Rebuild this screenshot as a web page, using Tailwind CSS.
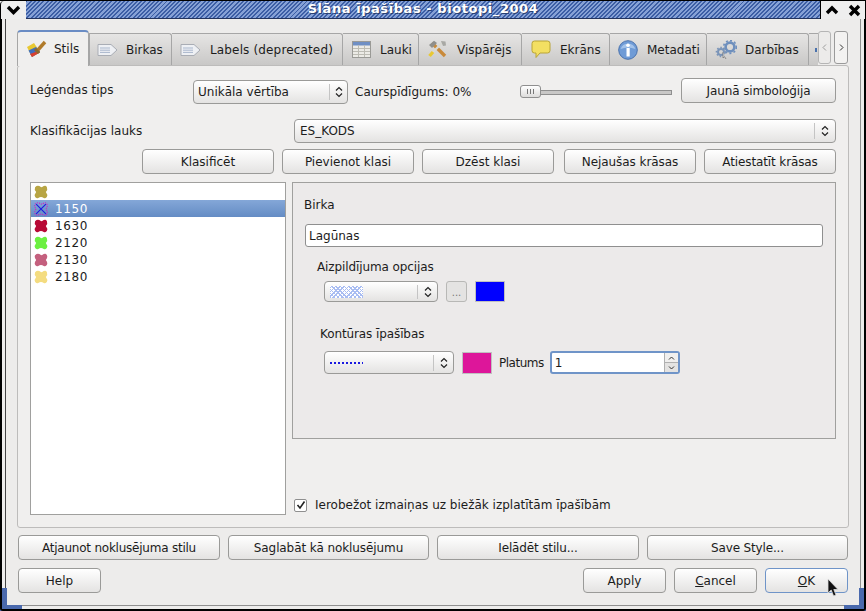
<!DOCTYPE html>
<html>
<head>
  <title>Slāņa īpašības</title>
  <script src="https://cdn.jsdelivr.net/npm/@tailwindcss/browser@4"></script>
</head>
<body class="bg-[#4a69ad] font-['DejaVu_Sans',sans-serif] text-[12px] text-[#1c1c1c]">
<div class="relative w-[866px] h-[611px] overflow-hidden">
  <!-- Window frame -->
  <div class="absolute inset-0 bg-[#edeceb] border-l-2 border-r-2 border-b-2 border-black rounded-bl-[3px] rounded-br-[3px]"></div>
  <div class="absolute left-[5px] top-[18px] right-[5px] bottom-[5px] border border-[#8f8f8f] border-l-[#444444]"></div>
  <!-- Resize corners -->
  <div class="absolute left-[2px] bottom-[2px] w-[5px] h-[21px] bg-[#4a69ad]"></div>
  <div class="absolute left-[2px] bottom-[2px] w-[20px] h-[4px] bg-[#4a69ad]"></div>
  <div class="absolute right-[2px] bottom-[2px] w-[5px] h-[21px] bg-[#4a69ad]"></div>
  <div class="absolute right-[2px] bottom-[2px] w-[20px] h-[4px] bg-[#4a69ad]"></div>

  <div class="relative flex flex-col h-full">
    <!-- Title bar -->
    <div class="flex h-[19px] bg-[#f5f5f5] border-t border-black">
      <div class="w-[26px] flex items-center justify-center bg-[#eeeeee] rounded-tl-[4px] border-l border-black">
        <svg width="15" height="10" viewBox="0 0 15 10"><path d="M2 2 L7.5 7.5 L13 2" fill="none" stroke="#000" stroke-width="3.4"/></svg>
      </div>
      <div class="flex-1 flex items-center justify-center border-b border-[#23345f] bg-[repeating-linear-gradient(135deg,#3c5ea5_0px,#3c5ea5_1.4px,#86a1d6_1.4px,#86a1d6_3px)]">
        <span class="font-bold text-[13px] text-white tracking-[0.56px] px-1 -mt-[1px] [text-shadow:1px_1px_0_#2a4070]">Slāņa īpašības - biotopi_2004</span>
      </div>
      <div class="w-[46px] flex items-center justify-around bg-[#eeeeee] border-l border-black border-r">
        <svg width="14" height="10" viewBox="0 0 14 10"><path d="M2 8 L7 3 L12 8" fill="none" stroke="#000" stroke-width="3.4"/></svg>
        <svg width="13" height="13" viewBox="0 0 13 13"><path d="M2 2 L11 11 M11 2 L2 11" fill="none" stroke="#000" stroke-width="3.4"/></svg>
      </div>
    </div>

    <!-- Body -->
    <div class="pl-[17px] pr-[17px] flex-1 flex flex-col">
      <!-- Tabs -->
      <div class="relative flex items-end h-[46px] pt-[11px]">
        <div class="z-10 w-[72px] h-[36px] -mb-[1px] bg-[#f0efee] rounded-t-[4px] border border-b-0 border-[#a6a6a6] border-t-2 border-t-[#6a8cc4] flex items-center pl-[8px] gap-[6px]">
          <svg width="22" height="18" viewBox="0 0 22 18"><path d="M1 7 L8 3 L14 12 L6 17 Z" fill="#e8c832"/><path d="M2.5 10.5 L10 7 L14 12 L6 17 Z" fill="#3f6fc0"/><path d="M4 14 L12 11 L14 12.5 L6 17 Z" fill="#d8402f"/><path d="M11 11 L19 2" stroke="#b07a2a" stroke-width="3.4"/><path d="M9 9 L13 13" stroke="#8a6a30" stroke-width="3"/></svg>
          <span>Stils</span>
        </div>
        <div class="w-[83px] h-[32px] bg-gradient-to-b from-[#e6e5e4] to-[#c9c8c7] border border-b-0 border-[#a6a6a6] rounded-tr-[3px] flex items-center pl-[7px] gap-[8px]">
          <svg width="21" height="14" viewBox="0 0 21 14"><path d="M1 1.5 H14 L20 7 L14 12.5 H1 Z" fill="#eef0f4" stroke="#a9adb5"/><path d="M3 5 H13 M3 7.2 H13 M3 9.4 H13" stroke="#a8b6cc"/></svg>
          <span>Birkas</span>
        </div>
        <div class="w-[171px] h-[32px] bg-gradient-to-b from-[#e6e5e4] to-[#c9c8c7] border border-l-0 border-b-0 border-[#a6a6a6] rounded-tr-[3px] flex items-center pl-[8px] gap-[9px]">
          <svg width="21" height="14" viewBox="0 0 21 14"><path d="M1 1.5 H14 L20 7 L14 12.5 H1 Z" fill="#eef0f4" stroke="#a9adb5"/><path d="M3 5 H13 M3 7.2 H13 M3 9.4 H13" stroke="#a8b6cc"/></svg>
          <span class="tracking-[0.15px]">Labels (deprecated)</span>
        </div>
        <div class="w-[76px] h-[32px] bg-gradient-to-b from-[#e6e5e4] to-[#c9c8c7] border border-l-0 border-b-0 border-[#a6a6a6] rounded-tr-[3px] flex items-center pl-[9px] gap-[9px]">
          <svg width="19" height="17" viewBox="0 0 19 17"><rect x="0.5" y="0.5" width="18" height="16" fill="#ecebe6" stroke="#9a9a96"/><rect x="1" y="1" width="17" height="3.5" fill="#6f8fc4"/><path d="M1 7.5 H18 M1 10.5 H18 M1 13.5 H18 M6.5 4 V16 M12.5 4 V16" stroke="#bdbcb4"/></svg>
          <span>Lauki</span>
        </div>
        <div class="w-[103px] h-[32px] bg-gradient-to-b from-[#e6e5e4] to-[#c9c8c7] border border-l-0 border-b-0 border-[#a6a6a6] rounded-tr-[3px] flex items-center pl-[9px] gap-[10px]">
          <svg width="19" height="19" viewBox="0 0 19 19"><path d="M4 3 L17 16" stroke="#c98a3a" stroke-width="3.4"/><path d="M1 5 L6 0.8 L9 3 L4 8 Z" fill="#8f8f8c"/><path d="M15 2 L2 15" stroke="#d9d9d4" stroke-width="2.4"/><path d="M5 12 L1.5 16" stroke="#e8c832" stroke-width="3.4"/><path d="M13 1 L17.5 1.5 L18 5.5 L15 6 Z" fill="#a8a8a4"/></svg>
          <span>Vispārējs</span>
        </div>
        <div class="w-[88px] h-[32px] bg-gradient-to-b from-[#e6e5e4] to-[#c9c8c7] border border-l-0 border-b-0 border-[#a6a6a6] rounded-tr-[3px] flex items-center pl-[9px] gap-[9px]">
          <svg width="20" height="19" viewBox="0 0 20 19"><path d="M3.5 1 H16.5 Q19 1 19 3.5 V10.5 Q19 13 16.5 13 H9 L5 17.5 V13 H3.5 Q1 13 1 10.5 V3.5 Q1 1 3.5 1 Z" fill="#f3df62" stroke="#b9a437"/></svg>
          <span>Ekrāns</span>
        </div>
        <div class="w-[97px] h-[32px] bg-gradient-to-b from-[#e6e5e4] to-[#c9c8c7] border border-l-0 border-b-0 border-[#a6a6a6] rounded-tr-[3px] flex items-center pl-[8px] gap-[9px]">
          <svg width="20" height="20" viewBox="0 0 20 20"><circle cx="10" cy="10" r="9.3" fill="#6f9bd6" stroke="#4a72ad"/><path d="M2.5 9 A8 8 0 0 1 17.5 9 Q10 6 2.5 9 Z" fill="#a4c3ea"/><rect x="8.5" y="8" width="3.2" height="8.5" fill="#fff"/><circle cx="10" cy="5.2" r="1.8" fill="#fff"/></svg>
          <span>Metadati</span>
        </div>
        <div class="w-[102px] h-[32px] bg-gradient-to-b from-[#e6e5e4] to-[#c9c8c7] border border-l-0 border-b-0 border-[#a6a6a6] rounded-tr-[3px] flex items-center pl-[8px] gap-[8px]">
          <svg width="22" height="20" viewBox="0 0 22 20"><circle cx="15" cy="7" r="4.4" fill="none" stroke="#6e8fbd" stroke-width="2.6"/><circle cx="15" cy="7" r="6.4" fill="none" stroke="#6e8fbd" stroke-width="1.6" stroke-dasharray="2 2.2"/><circle cx="6" cy="12" r="3" fill="none" stroke="#7a94b8" stroke-width="2"/><circle cx="6" cy="12" r="4.6" fill="none" stroke="#7a94b8" stroke-width="1.4" stroke-dasharray="1.6 1.8"/><path d="M8 12 V18 L9.5 16.6 L11 19" fill="#ddd" stroke="#777" stroke-width="0.8"/></svg>
          <span>Darbības</span>
        </div>
        <div class="w-[9px] h-[32px] bg-gradient-to-b from-[#e6e5e4] to-[#c9c8c7] border-t border-[#a6a6a6] flex items-center">
          <span class="w-[2px] h-[4px] ml-[6px] bg-[#4a72ad]"></span>
        </div>
        <!-- Tab scroll buttons -->
        <div class="flex gap-[3px] absolute left-[801px] top-[12px]">
          <div class="w-[13px] h-[33px] rounded-[3px] border border-[#b5b5b5] bg-[#ecebea] flex items-center justify-center">
            <svg width="5" height="7" viewBox="0 0 5 7"><path d="M4 0.5 L1 3.5 L4 6.5" fill="none" stroke="#9a9a9a"/></svg>
          </div>
          <div class="w-[14px] h-[33px] rounded-[3px] border border-[#9a9a9a] bg-[#f3f2f1] flex items-center justify-center">
            <svg width="5" height="7" viewBox="0 0 5 7"><path d="M1 0.5 L4 3.5 L1 6.5" fill="none" stroke="#333"/></svg>
          </div>
        </div>
      </div>

      <!-- Pane -->
      <div class="h-[463px] w-[832px] bg-[#f0efee] border border-[#bdbcbb] rounded-[3px] pl-[12px] flex flex-col">
        <!-- Legend row -->
        <div class="flex items-center h-[26px] mt-[13px]">
          <span class="w-[163px] -mt-[4px]">Leģendas tips</span>
          <div class="w-[155px] h-[24px] rounded-[4px] border border-[#9a9a98] bg-gradient-to-b from-white to-[#e4e3e2] flex items-center pl-[4px]">
            <span class="flex-1">Unikāla vērtība</span>
            <span class="w-[18px] h-[16px] border-l border-[#c4c4c4] flex items-center justify-center">
              <svg width="8" height="12" viewBox="0 0 8 12"><path d="M1 4.5 L4 1.5 L7 4.5 M1 7.5 L4 10.5 L7 7.5" fill="none" stroke="#222" stroke-width="1.2"/></svg>
            </span>
          </div>
          <span class="w-[172px] pl-[7px]">Caurspīdīgums: 0%</span>
          <!-- Slider -->
          <div class="relative w-[152px] h-[14px] flex items-center">
            <div class="w-full h-[5px] bg-[#c9c8c7] border border-[#8f8f8f]"></div>
            <div class="absolute left-0 top-0 w-[21px] h-[13px] rounded-[3px] border border-[#8f8f8f] bg-gradient-to-b from-white to-[#dddcdb] flex items-center justify-center gap-[2px]">
              <span class="w-px h-[5px] bg-[#777]"></span><span class="w-px h-[5px] bg-[#777]"></span><span class="w-px h-[5px] bg-[#777]"></span>
            </div>
          </div>
          <div class="w-[155px] h-[25px] ml-[9px] -mt-[3px] rounded-[4px] border border-[#9a9a98] bg-gradient-to-b from-white to-[#e4e3e2] flex items-center justify-center tracking-[-0.12px]">Jaunā simboloģija</div>
        </div>

        <!-- Classification row -->
        <div class="flex items-center h-[24px] mt-[14px]">
          <span class="w-[264px]">Klasifikācijas lauks</span>
          <div class="w-[542px] h-[24px] rounded-[4px] border border-[#9a9a98] bg-gradient-to-b from-white to-[#e4e3e2] flex items-center pl-[5px]">
            <span class="flex-1">ES_KODS</span>
            <span class="w-[21px] h-[16px] border-l border-[#c4c4c4] flex items-center justify-center">
              <svg width="8" height="12" viewBox="0 0 8 12"><path d="M1 4.5 L4 1.5 L7 4.5 M1 7.5 L4 10.5 L7 7.5" fill="none" stroke="#222" stroke-width="1.2"/></svg>
            </span>
          </div>
        </div>

        <!-- Class buttons -->
        <div class="flex h-[25px] mt-[6px] pl-[112px] gap-[8px]">
          <div class="w-[132px] rounded-[4px] border border-[#9a9a98] bg-gradient-to-b from-white to-[#e4e3e2] flex items-center justify-center">Klasificēt</div>
          <div class="w-[132px] rounded-[4px] border border-[#9a9a98] bg-gradient-to-b from-white to-[#e4e3e2] flex items-center justify-center">Pievienot klasi</div>
          <div class="w-[132px] rounded-[4px] border border-[#9a9a98] bg-gradient-to-b from-white to-[#e4e3e2] flex items-center justify-center">Dzēst klasi</div>
          <div class="w-[132px] ml-[2px] rounded-[4px] border border-[#9a9a98] bg-gradient-to-b from-white to-[#e4e3e2] flex items-center justify-center tracking-[-0.07px]">Nejaušas krāsas</div>
          <div class="w-[132px] rounded-[4px] border border-[#9a9a98] bg-gradient-to-b from-white to-[#e4e3e2] flex items-center justify-center tracking-[-0.12px]">Atiestatīt krāsas</div>
        </div>

        <!-- Main area -->
        <div class="flex mt-[8px] gap-[6px]">
          <!-- Class list -->
          <div class="w-[256px] h-[333px] bg-white border border-[#a0a09e] tracking-[0.6px]">
            <div class="flex items-center h-[17px] pl-[3px]"><svg width="14" height="14" viewBox="0 0 13 13"><path d="M1 2 Q3 0 5 1 Q7 3 9 1 Q11 0 12 2 Q13 4 11 6.5 Q13 9 12 11 Q11 13 9 12 Q6.5 10.5 4 12 Q2 13 1 11 Q0 9 2 6.5 Q0 4 1 2 Z" fill="#b8a544"/></svg></div>
            <div class="flex items-center h-[17px] pl-[3px] gap-[7px] bg-gradient-to-b from-[#84a7d8] to-[#648cc4] text-white">
              <svg width="14" height="14" viewBox="0 0 13 13"><path d="M1 2 Q3 0 5 1 Q7 3 9 1 Q11 0 12 2 Q13 4 11 6.5 Q13 9 12 11 Q11 13 9 12 Q6.5 10.5 4 12 Q2 13 1 11 Q0 9 2 6.5 Q0 4 1 2 Z" fill="none" stroke="#d020c0" stroke-dasharray="1 1"/><path d="M2 2 L11 11 M11 2 L2 11" stroke="#1a1ae0"/></svg>
              <span>1150</span>
            </div>
            <div class="flex items-center h-[17px] pl-[3px] gap-[7px]">
              <svg width="14" height="14" viewBox="0 0 13 13"><path d="M1 2 Q3 0 5 1 Q7 3 9 1 Q11 0 12 2 Q13 4 11 6.5 Q13 9 12 11 Q11 13 9 12 Q6.5 10.5 4 12 Q2 13 1 11 Q0 9 2 6.5 Q0 4 1 2 Z" fill="#b80a36"/></svg>
              <span>1630</span>
            </div>
            <div class="flex items-center h-[17px] pl-[3px] gap-[7px]">
              <svg width="14" height="14" viewBox="0 0 13 13"><path d="M1 2 Q3 0 5 1 Q7 3 9 1 Q11 0 12 2 Q13 4 11 6.5 Q13 9 12 11 Q11 13 9 12 Q6.5 10.5 4 12 Q2 13 1 11 Q0 9 2 6.5 Q0 4 1 2 Z" fill="#6cf040"/></svg>
              <span>2120</span>
            </div>
            <div class="flex items-center h-[17px] pl-[3px] gap-[7px]">
              <svg width="14" height="14" viewBox="0 0 13 13"><path d="M1 2 Q3 0 5 1 Q7 3 9 1 Q11 0 12 2 Q13 4 11 6.5 Q13 9 12 11 Q11 13 9 12 Q6.5 10.5 4 12 Q2 13 1 11 Q0 9 2 6.5 Q0 4 1 2 Z" fill="#c4607e"/></svg>
              <span>2130</span>
            </div>
            <div class="flex items-center h-[17px] pl-[3px] gap-[7px]">
              <svg width="14" height="14" viewBox="0 0 13 13"><path d="M1 2 Q3 0 5 1 Q7 3 9 1 Q11 0 12 2 Q13 4 11 6.5 Q13 9 12 11 Q11 13 9 12 Q6.5 10.5 4 12 Q2 13 1 11 Q0 9 2 6.5 Q0 4 1 2 Z" fill="#f4dc80"/></svg>
              <span>2180</span>
            </div>
          </div>

          <!-- Right column -->
          <div class="w-[544px] flex flex-col">
            <div class="h-[257px] bg-[#eceaea] border border-[#a0a09e] pl-[11px] flex flex-col">
              <span class="mt-[13px]">Birka</span>
              <div class="w-[518px] h-[23px] mt-[10px] ml-[1px] bg-white border border-[#8f8f8f] rounded-[3px] flex items-center pl-[3px]">Lagūnas</div>
              <span class="mt-[11px] ml-[13px] tracking-[-0.1px]">Aizpildījuma opcijas</span>
              <div class="flex items-center mt-[5px] ml-[20px]">
                <div class="w-[114px] h-[21px] rounded-[4px] border border-[#9a9a98] bg-gradient-to-b from-white to-[#e4e3e2] flex items-center pl-[5px]">
                  <span class="w-[33px] h-[12px] flex-none bg-white bg-[repeating-linear-gradient(45deg,#a9bdf2_0px,#a9bdf2_1px,transparent_1px,transparent_3px),repeating-linear-gradient(-45deg,#a9bdf2_0px,#a9bdf2_1px,transparent_1px,transparent_3px)]"></span>
                  <span class="flex-1"></span>
                  <span class="w-[20px] h-[14px] border-l border-[#c4c4c4] flex items-center justify-center">
                    <svg width="8" height="12" viewBox="0 0 8 12"><path d="M1 4.5 L4 1.5 L7 4.5 M1 7.5 L4 10.5 L7 7.5" fill="none" stroke="#222" stroke-width="1.2"/></svg>
                  </span>
                </div>
                <div class="w-[21px] h-[21px] ml-[8px] rounded-[3px] border border-[#b8b8b6] bg-[#e4e3e2] flex items-end justify-center text-[#777] text-[10px] leading-[16px]">...</div>
                <div class="w-[30px] h-[21px] ml-[8px] bg-[#0000ff] border border-[#c0c0c0]"></div>
              </div>
              <span class="mt-[23px] ml-[16px] tracking-[-0.1px]">Kontūras īpašības</span>
              <div class="flex items-center mt-[8px] ml-[20px]">
                <div class="w-[130px] h-[23px] rounded-[4px] border border-[#9a9a98] bg-gradient-to-b from-white to-[#e4e3e2] flex items-center pl-[5px]">
                  <span class="w-[33px] h-[2px] flex-none bg-[repeating-linear-gradient(90deg,#1a1ae0_0px,#1a1ae0_2px,transparent_2px,transparent_4px)]"></span>
                  <span class="flex-1"></span>
                  <span class="w-[20px] h-[16px] border-l border-[#c4c4c4] flex items-center justify-center">
                    <svg width="8" height="12" viewBox="0 0 8 12"><path d="M1 4.5 L4 1.5 L7 4.5 M1 7.5 L4 10.5 L7 7.5" fill="none" stroke="#222" stroke-width="1.2"/></svg>
                  </span>
                </div>
                <div class="w-[30px] h-[22px] ml-[8px] bg-[#dd169a] border border-[#c0c0c0]"></div>
                <span class="ml-[7px] tracking-[-0.5px]">Platums</span>
                <div class="w-[130px] h-[23px] ml-[6px] bg-white border-2 border-[#6f94c8] rounded-[3px] flex items-center pl-[3px] relative">
                  <span class="flex-1">1</span>
                  <div class="w-[14px] h-full border-l border-[#b0b0b0] flex flex-col">
                    <span class="flex-1 bg-[#f0efee] border-b border-[#b0b0b0] flex items-center justify-center"><svg width="7" height="4" viewBox="0 0 7 4"><path d="M1 3.5 L3.5 1 L6 3.5" fill="none" stroke="#333"/></svg></span>
                    <span class="flex-1 bg-[#e4e3e2] flex items-center justify-center"><svg width="7" height="4" viewBox="0 0 7 4"><path d="M1 0.5 L3.5 3 L6 0.5" fill="none" stroke="#333"/></svg></span>
                  </div>
                </div>
              </div>
            </div>
            <div class="flex items-center mt-[57px] ml-[2px] gap-[8px]">
              <div class="w-[13px] h-[13px] bg-white border border-[#8f8f8f] rounded-[2px] flex items-center justify-center">
                <svg width="10" height="10" viewBox="0 0 10 10"><path d="M1.5 5 L4 8 L8.5 1.5" fill="none" stroke="#222" stroke-width="1.6"/></svg>
              </div>
              <span>Ierobežot izmaiņas uz biežāk izplatītām īpašībām</span>
            </div>
          </div>
        </div>
      </div>

      <!-- Style buttons -->
      <div class="flex h-[25px] mt-[7px] pl-[1px] gap-[8px]">
        <div class="w-[202px] rounded-[4px] border border-[#9a9a98] bg-gradient-to-b from-white to-[#e4e3e2] flex items-center justify-center tracking-[-0.23px]">Atjaunot noklusējuma stilu</div>
        <div class="w-[201px] rounded-[4px] border border-[#9a9a98] bg-gradient-to-b from-white to-[#e4e3e2] flex items-center justify-center tracking-[-0.1px]">Saglabāt kā noklusējumu</div>
        <div class="w-[202px] rounded-[4px] border border-[#9a9a98] bg-gradient-to-b from-white to-[#e4e3e2] flex items-center justify-center tracking-[-0.15px]">Ielādēt stilu...</div>
        <div class="w-[201px] rounded-[4px] border border-[#9a9a98] bg-gradient-to-b from-white to-[#e4e3e2] flex items-center justify-center tracking-[-0.15px]">Save Style...</div>
      </div>

      <!-- Dialog buttons -->
      <div class="flex h-[25px] mt-[8px] pl-[1px] w-[831px] gap-[8px]">
        <div class="w-[83px] mr-auto rounded-[4px] border border-[#9a9a98] bg-gradient-to-b from-white to-[#e4e3e2] flex items-center justify-center">Help</div>
        <div class="w-[83px] rounded-[4px] border border-[#9a9a98] bg-gradient-to-b from-white to-[#e4e3e2] flex items-center justify-center">Apply</div>
        <div class="w-[83px] rounded-[4px] border border-[#9a9a98] bg-gradient-to-b from-white to-[#e4e3e2] flex items-center justify-center"><span><u>C</u>ancel</span></div>
        <div class="w-[83px] rounded-[4px] border border-[#6f94c8] bg-gradient-to-b from-white to-[#e4e3e2] flex items-center justify-center"><span><u>O</u>K</span></div>
      </div>
    </div>
  </div>

  <!-- Mouse cursor -->
  <svg class="absolute left-[827px] top-[578px]" width="13" height="20" viewBox="0 0 13 20"><path d="M1 1 V15 L4.2 12 L6.6 18 L9 17 L6.8 11.5 H11 Z" fill="#111" stroke="#ddd" stroke-width="0.8"/></svg>
</div>
</body>
</html>
